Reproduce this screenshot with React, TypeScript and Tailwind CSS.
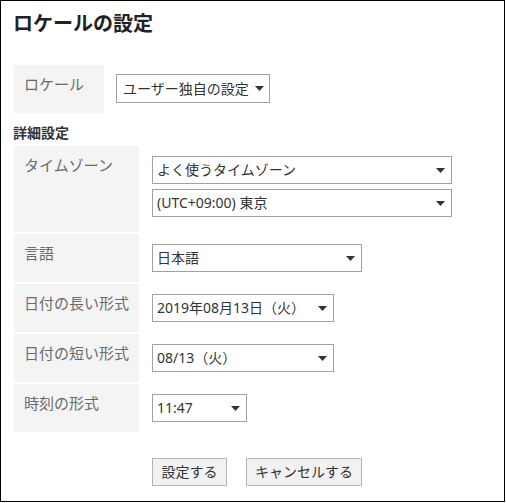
const font = { fontFamily: '"Noto Sans", "Noto Sans CJK JP", sans-serif' };

function Arrow() {
  return (
    <svg width="9" height="5" viewBox="0 0 9 5" className="shrink-0">
      <path d="M0 0h9L4.5 5z" fill="#333" />
    </svg>
  );
}

interface SelectBoxProps {
  value: string;
  className: string;
}

function SelectBox({ value, className }: SelectBoxProps) {
  return (
    <div
      className={`flex h-[28px] items-center justify-between border border-[#a0a0a0] bg-white pl-[4px] pr-[6px] text-[14px] leading-[20px] text-[#333] ${className}`}
    >
      <span className="whitespace-nowrap">{value}</span>
      <Arrow />
    </div>
  );
}

interface RowProps {
  label: string;
  tall?: boolean;
  children: React.ReactNode;
}

function Row({ label, tall, children }: RowProps) {
  return (
    <div className="flex">
      <div
        className={`w-[125px] shrink-0 bg-[#f4f4f4] pl-[10px] pt-[9px] text-[15px] leading-[20px] text-[#6b6b6b] ${tall ? 'h-[86px]' : 'h-[48px]'}`}
      >
        {label}
      </div>
      <div className="ml-[13px] flex flex-col gap-[5px] pt-[10px]">{children}</div>
    </div>
  );
}

export default function App() {
  return (
    <div className="h-[502px] w-[505px] border border-black bg-white" style={font}>
      <h1 className="pl-[12px] pt-[13px] text-[20px] font-bold leading-[20px] text-[#222]">
        ロケールの設定
      </h1>

      {/* ロケール */}
      <div className="ml-[13px] mt-[31px] flex">
        <div className="h-[48px] w-[90px] bg-[#f4f4f4] pl-[10px] pt-[9px] text-[15px] leading-[20px] text-[#6b6b6b]">
          ロケール
        </div>
        <div className="ml-[12px] pt-[9px]">
          <div className="flex h-[29px] items-center gap-[6px] border border-[#a0a0a0] bg-white pl-[6px] pr-[5px] text-[14px] leading-[20px] text-[#333]">
            <span className="whitespace-nowrap">ユーザー独自の設定</span>
            <Arrow />
          </div>
        </div>
      </div>

      <h2 className="mt-[10px] pl-[12px] text-[14px] font-bold leading-[20px] text-[#333]">詳細設定</h2>

      {/* 詳細設定 */}
      <div className="ml-[13px] mt-[3px] flex flex-col gap-[2px]">
        <Row label="タイムゾーン" tall>
          <SelectBox value="よく使うタイムゾーン" className="w-[300px]" />
          <SelectBox value="(UTC+09:00) 東京" className="w-[300px]" />
        </Row>
        <Row label="言語">
          <SelectBox value="日本語" className="w-[210px]" />
        </Row>
        <Row label="日付の長い形式">
          <SelectBox value="2019年08月13日（火）" className="w-[182px]" />
        </Row>
        <Row label="日付の短い形式">
          <SelectBox value="08/13（火）" className="w-[182px]" />
        </Row>
        <Row label="時刻の形式">
          <SelectBox value="11:47" className="w-[95px]" />
        </Row>
      </div>

      <div className="ml-[151px] mt-[26px] flex gap-[19px]">
        <button className="h-[28px] w-[75px] border border-[#b4b4b4] bg-[#f2f2f2] text-[14px] leading-[20px] text-[#333]">
          設定する
        </button>
        <button className="h-[28px] w-[116px] border border-[#b4b4b4] bg-[#f2f2f2] text-[14px] leading-[20px] text-[#333]">
          キャンセルする
        </button>
      </div>
    </div>
  );
}
